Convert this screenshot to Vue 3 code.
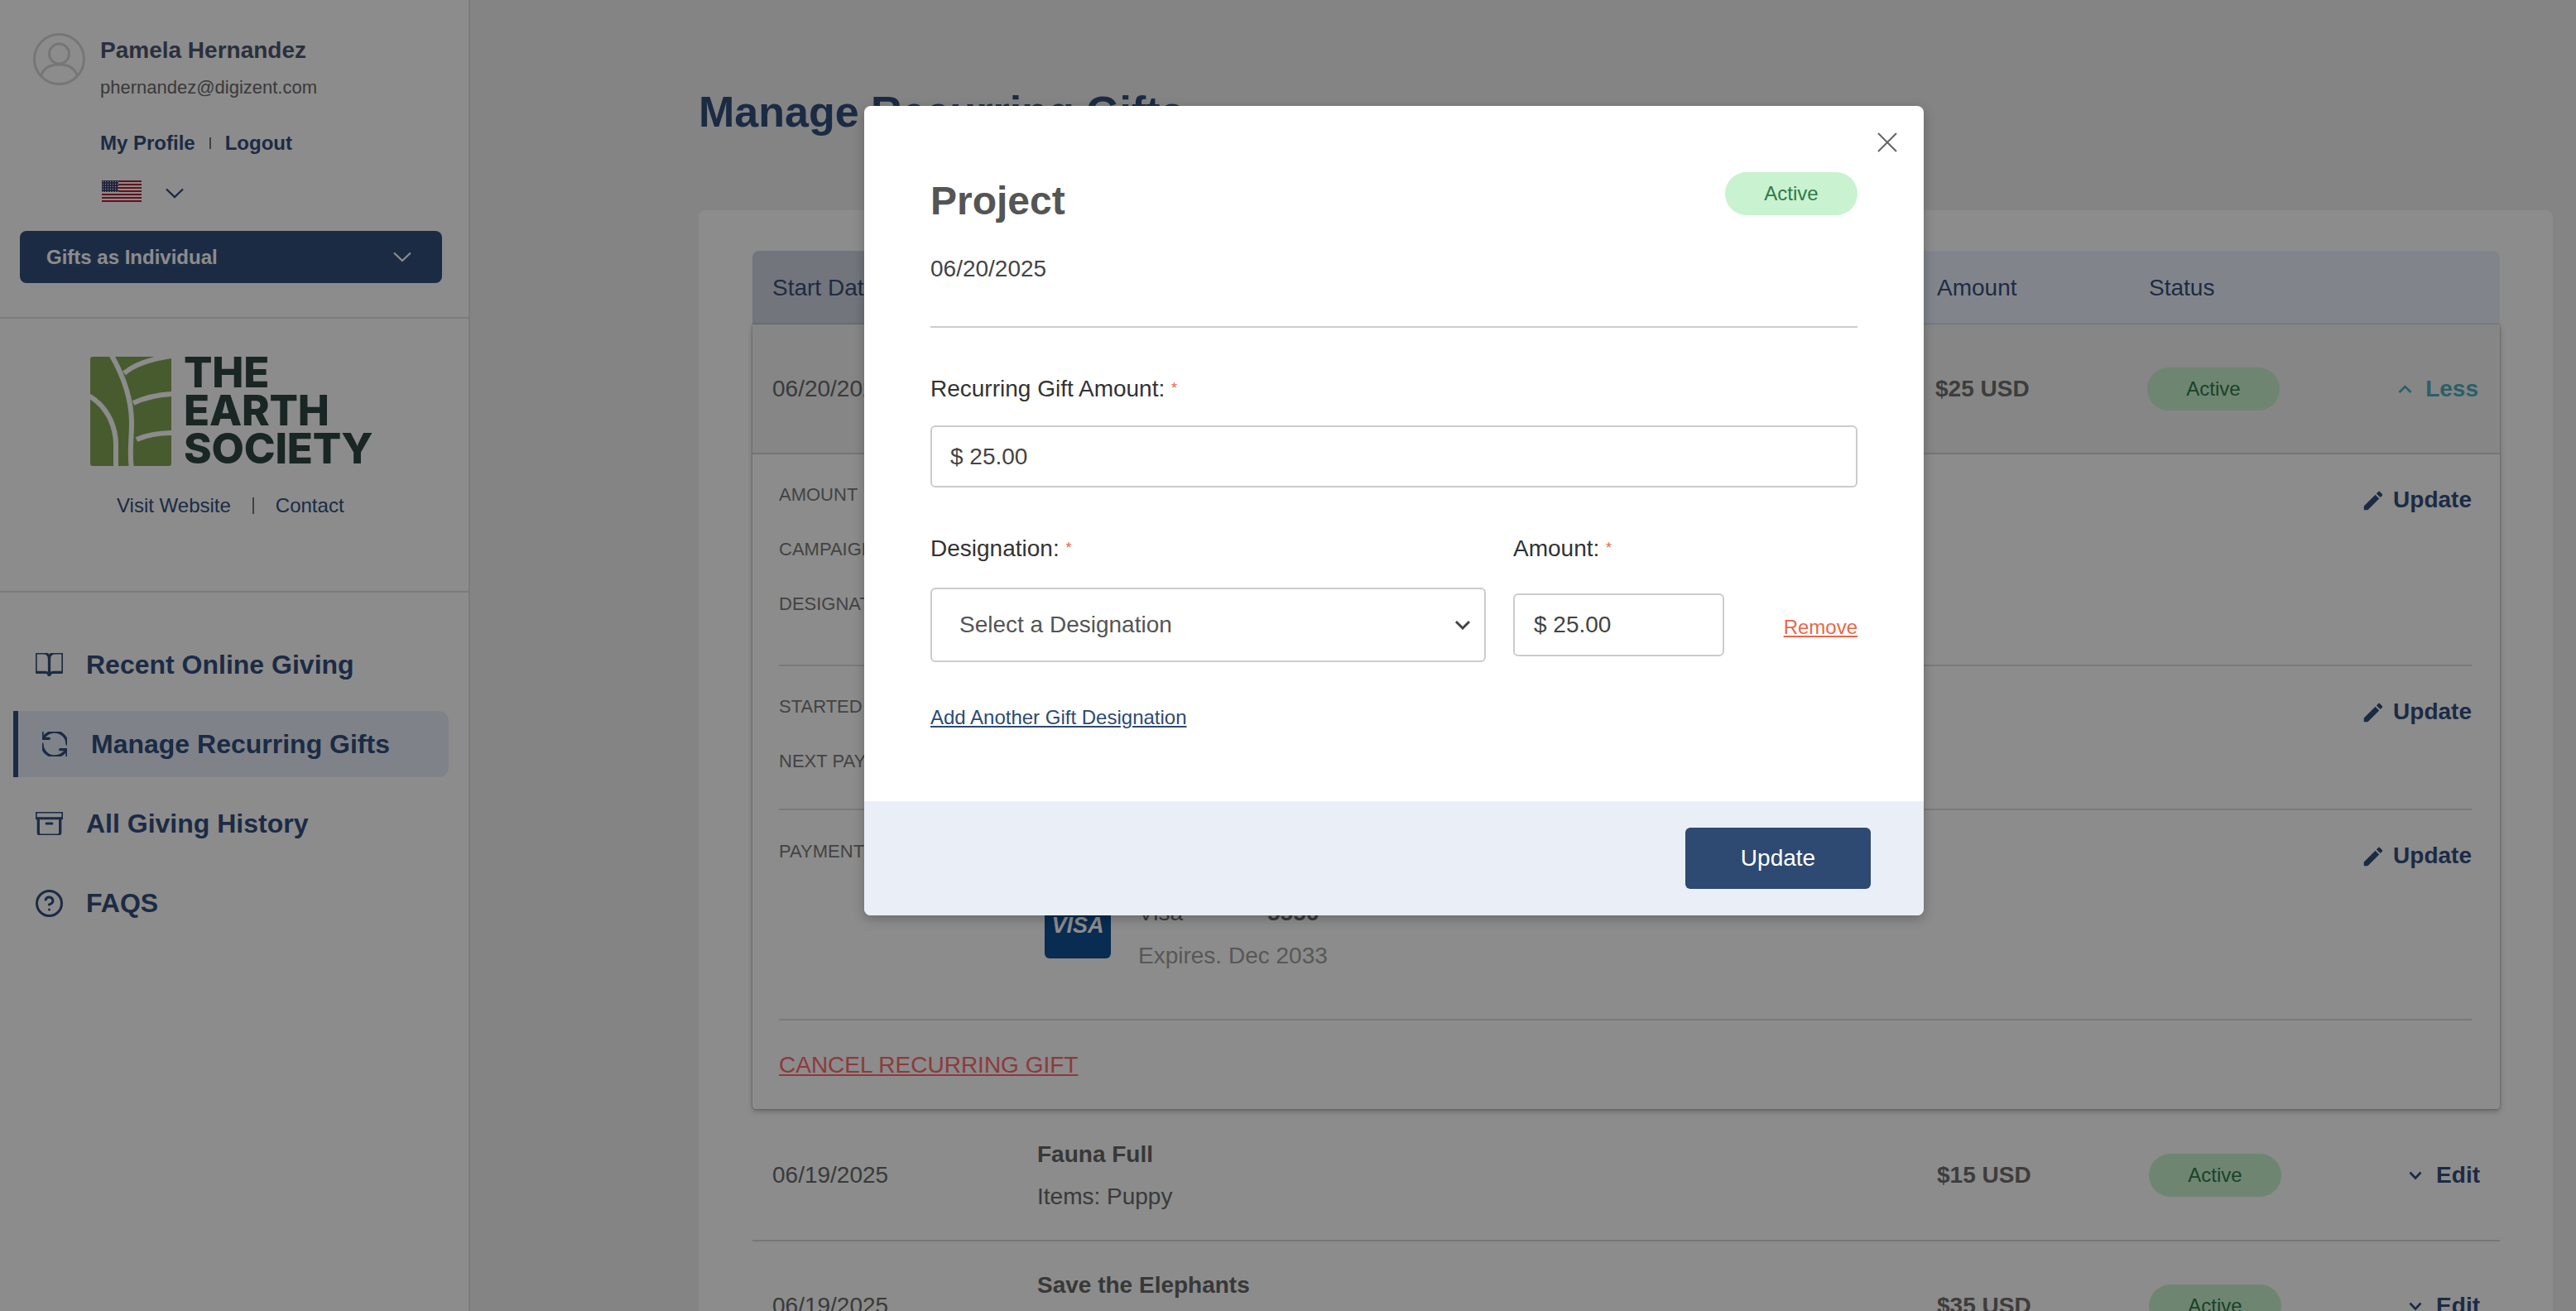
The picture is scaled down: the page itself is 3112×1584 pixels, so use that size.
<script setup>
const navItems = [
  { label: 'Recent Online Giving', icon: 'book' },
  { label: 'Manage Recurring Gifts', icon: 'refresh', active: true },
  { label: 'All Giving History', icon: 'archive' },
  { label: 'FAQS', icon: 'help' },
]
const redStripes = [0, 4, 8, 12, 16, 20, 24]
const rows = [
  { date: '06/19/2025', name: 'Fauna Full', items: 'Items: Puppy', amount: '$15 USD' },
  { date: '06/19/2025', name: 'Save the Elephants', items: 'Items: Elephant', amount: '$35 USD' },
]
</script>

<template>
  <div class="page">
    <aside class="sidebar">
      <div class="profile">
        <svg class="avatar" viewBox="0 0 63 63" fill="none" stroke="#d8d8d8" stroke-width="3">
          <circle cx="31.5" cy="31.5" r="30" />
          <circle cx="31.5" cy="25" r="12" />
          <path d="M9.5 52c3-10 12-14 22-14s19 4 22 14" />
        </svg>
        <div class="profile-info">
          <div class="user-name">Pamela Hernandez</div>
          <div class="user-email">phernandez@digizent.com</div>
          <div class="user-links">
            <span>My Profile</span><i class="bar"></i><span>Logout</span>
          </div>
          <div class="lang">
            <svg class="flag" width="48" height="26" viewBox="0 0 48 26">
              <defs>
                <pattern id="stars" width="3" height="3" patternUnits="userSpaceOnUse">
                  <circle cx="1.5" cy="1.5" r=".7" fill="#fff" />
                </pattern>
              </defs>
              <rect width="48" height="26" fill="#fff" />
              <rect v-for="y in redStripes" :key="y" :y="y" width="48" height="2" fill="#b22234" />
              <rect width="20" height="14" fill="#3c3b6e" />
              <rect width="20" height="14" fill="url(#stars)" />
            </svg>
            <svg class="lang-chevron" width="22" height="13" viewBox="0 0 22 13" fill="none" stroke="#344f7d" stroke-width="2.4">
              <path d="M1 1.5l10 9.5 10-9.5" />
            </svg>
          </div>
        </div>
      </div>
      <div class="gifts-btn">
        <span>Gifts as Individual</span>
        <svg width="22" height="13" viewBox="0 0 22 13" fill="none" stroke="#fff" stroke-width="2.2">
          <path d="M1 1.5l10 9.5 10-9.5" />
        </svg>
      </div>
      <div class="org">
        <div class="logo">
          <svg class="logo-mark" width="98" height="132" viewBox="0 0 98 132">
            <rect width="98" height="132" rx="3" fill="#83a757" />
            <g fill="none" stroke="#fff" stroke-width="6">
              <path d="M25 -3C36 16 50 45 50 80C50 100 47 118 50 135" />
              <path d="M-2 47C18 58 30 80 31 104L31 135" />
              <path d="M41 20C50 12 66 4 98 -1" />
              <path d="M52 56C65 50 80 46 100 45" />
              <path d="M56 100C70 94 85 92 100 92" />
            </g>
          </svg>
          <div class="logo-text">
            <span>THE</span>
            <span>EARTH</span>
            <span>SOCIETY</span>
          </div>
        </div>
        <div class="org-links">
          <span>Visit Website</span><i class="bar tall"></i><span>Contact</span>
        </div>
      </div>
      <nav class="nav">
        <div v-for="item in navItems" :key="item.label" class="nav-item" :class="{ active: item.active }">
          <svg v-if="item.icon === 'book'" class="nav-icon" viewBox="2 3 20 18" width="33" height="28" preserveAspectRatio="none">
            <path d="M12 7v14" />
            <path d="M3 18a1 1 0 0 1-1-1V4a1 1 0 0 1 1-1h5a4 4 0 0 1 4 4 4 4 0 0 1 4-4h5a1 1 0 0 1 1 1v13a1 1 0 0 1-1 1h-6a3 3 0 0 0-3 3 3 3 0 0 0-3-3z" />
          </svg>
          <svg v-else-if="item.icon === 'refresh'" class="nav-icon" viewBox="3 3 18 18" width="30" height="30">
            <path d="M21 12a9 9 0 0 0-9-9 9.75 9.75 0 0 0-6.74 2.74L3 8" />
            <path d="M3 3v5h5" />
            <path d="M3 12a9 9 0 0 0 9 9 9.75 9.75 0 0 0 6.74-2.74L21 16" />
            <path d="M16 16h5v5" />
          </svg>
          <svg v-else-if="item.icon === 'archive'" class="nav-icon" viewBox="2 3 20 18" width="33" height="28" preserveAspectRatio="none">
            <rect x="2" y="3" width="20" height="5" rx="1" />
            <path d="M4 8v11a2 2 0 0 0 2 2h12a2 2 0 0 0 2-2V8" />
            <path d="M10 12h4" />
          </svg>
          <svg v-else class="nav-icon" viewBox="1 1 22 22" width="33" height="33">
            <circle cx="12" cy="12" r="10" />
            <path d="M9.09 9a3 3 0 0 1 5.83 1c0 2-3 3-3 3" />
            <path d="M12 17h.01" />
          </svg>
          <span>{{ item.label }}</span>
        </div>
      </nav>
    </aside>

    <main class="main">
      <h1 class="title">Manage Recurring Gifts</h1>
      <section class="card">
        <div class="thead row-grid">
          <span>Start Date</span>
          <span>Gift</span>
          <span>Amount</span>
          <span>Status</span>
        </div>

        <div class="expanded">
          <div class="row-grid exp-head">
            <span class="cell-date">06/20/2025</span>
            <span class="cell-name"><b>Project</b></span>
            <b class="cell-amount">$25 USD</b>
            <span class="pill">Active</span>
            <span class="action less">
              <svg width="17" height="10" viewBox="0 0 17 10" fill="none" stroke="currentColor" stroke-width="2.6"><path d="M1.5 9l7-7 7 7" /></svg>
              Less
            </span>
          </div>

          <div class="detail detail-a">
            <div class="labels">
              <span>AMOUNT</span>
              <span>CAMPAIGN</span>
              <span>DESIGNATION</span>
            </div>
            <span class="update">
              <svg width="30" height="30" viewBox="0 0 24 24" fill="#344f7d"><path d="M3 17.25V21h3.75L17.81 9.94l-3.75-3.75L3 17.25zM20.71 7.04c.39-.39.39-1.02 0-1.41l-2.34-2.34c-.39-.39-1.02-.39-1.41 0l-1.83 1.83 3.75 3.75 1.83-1.83z" /></svg>
              Update
            </span>
          </div>
          <div class="detail detail-b">
            <div class="labels">
              <span>STARTED</span>
              <span>NEXT PAYMENT</span>
            </div>
            <span class="update">
              <svg width="30" height="30" viewBox="0 0 24 24" fill="#344f7d"><path d="M3 17.25V21h3.75L17.81 9.94l-3.75-3.75L3 17.25zM20.71 7.04c.39-.39.39-1.02 0-1.41l-2.34-2.34c-.39-.39-1.02-.39-1.41 0l-1.83 1.83 3.75 3.75 1.83-1.83z" /></svg>
              Update
            </span>
          </div>
          <div class="detail detail-c">
            <div class="labels pay-label">
              <span>PAYMENT METHOD</span>
            </div>
            <div class="pay">
              <div class="visa">VISA</div>
              <div class="pay-info">
                <div class="pay-line"><span class="pay-brand">Visa</span><b>5556</b></div>
                <div class="pay-exp">Expires. Dec 2033</div>
              </div>
            </div>
            <span class="update">
              <svg width="30" height="30" viewBox="0 0 24 24" fill="#344f7d"><path d="M3 17.25V21h3.75L17.81 9.94l-3.75-3.75L3 17.25zM20.71 7.04c.39-.39.39-1.02 0-1.41l-2.34-2.34c-.39-.39-1.02-.39-1.41 0l-1.83 1.83 3.75 3.75 1.83-1.83z" /></svg>
              Update
            </span>
          </div>
          <div class="cancel-wrap"><span class="cancel">CANCEL RECURRING GIFT</span></div>
        </div>

        <div v-for="row in rows" :key="row.name" class="row-grid row">
          <span class="cell-date">{{ row.date }}</span>
          <div class="cell-name">
            <b>{{ row.name }}</b>
            <span>{{ row.items }}</span>
          </div>
          <b class="cell-amount">{{ row.amount }}</b>
          <span class="pill">Active</span>
          <span class="action edit">
            <svg width="16" height="11" viewBox="0 0 16 11" fill="none" stroke="currentColor" stroke-width="2.6"><path d="M1.5 1.5l6.5 7 6.5-7" /></svg>
            Edit
          </span>
        </div>
      </section>
    </main>

    <div class="overlay"></div>

    <div class="modal">
      <svg class="close" width="24" height="24" viewBox="0 0 24 24" fill="none" stroke="#666" stroke-width="2"><path d="M1 1l22 22M23 1L1 23" /></svg>
      <div class="modal-body">
        <div class="modal-head">
          <h2>Project</h2>
          <span class="pill modal-pill">Active</span>
        </div>
        <div class="modal-date">06/20/2025</div>
        <hr />
        <label class="field-label">Recurring Gift Amount: <em>*</em></label>
        <input class="input full" value="$ 25.00" readonly />
        <div class="split">
          <label class="field-label">Designation: <em>*</em></label>
          <label class="field-label">Amount: <em>*</em></label>
          <span></span>
          <div class="select">
            <span>Select a Designation</span>
            <svg width="20" height="12" viewBox="0 0 20 12" fill="none" stroke="#444" stroke-width="3"><path d="M2 2l8 8 8-8" /></svg>
          </div>
          <input class="input amount" value="$ 25.00" readonly />
          <a class="remove">Remove</a>
        </div>
        <a class="add-link">Add Another Gift Designation</a>
      </div>
      <div class="modal-foot">
        <button class="update-btn">Update</button>
      </div>
    </div>
  </div>
</template>

<style>
html, body { margin: 0; padding: 0; overflow: hidden; }
</style>

<style scoped>
.page {
  position: relative;
  display: flex;
  width: 3112px;
  height: 1584px;
  overflow: hidden;
  background: #f0f0f0;
  font-family: "Liberation Sans", Arial, sans-serif;
  font-size: 28px;
  color: #6a6a6a;
}
.sidebar {
  width: 568px;
  flex: none;
  box-sizing: border-box;
  background: #fff;
  border-right: 2px solid #e0e0e0;
}
.profile { display: flex; padding: 40px 0 0 40px; }
.avatar { width: 63px; height: 63px; flex: none; margin-right: 18px; }
.profile-info { padding-top: 4px; }
.user-name { font-size: 28px; line-height: 34px; font-weight: 700; color: #4d5870; }
.user-email { margin-top: 14px; font-size: 22px; line-height: 28px; color: #6a6a6a; }
.user-links { display: flex; align-items: center; margin-top: 37px; font-size: 24px; line-height: 32px; font-weight: 700; color: #344f7d; }
.bar { width: 2px; height: 14px; margin: 0 17px; background: #777; }
.bar.tall { height: 20px; margin: 0 26px; }
.lang { display: flex; align-items: center; margin-top: 29px; height: 26px; padding-left: 2px; }
.flag { flex: none; }
.lang-chevron { margin-left: 29px; margin-top: 5px; }
.gifts-btn {
  display: flex;
  align-items: center;
  justify-content: space-between;
  width: 510px;
  height: 63px;
  box-sizing: border-box;
  margin: 35px 0 41px 24px;
  padding: 0 37px 0 32px;
  border-radius: 8px;
  background: #344f7d;
  color: #fff;
  font-size: 24px;
  font-weight: 700;
}
.org { border-top: 2px solid #e0e0e0; border-bottom: 2px solid #e0e0e0; padding: 46px 0 87px; }
.logo { display: flex; margin-left: 109px; height: 132px; }
.logo-text {
  display: flex;
  flex-direction: column;
  margin: -4px 0 0 15px;
  font-family: Inter, sans-serif;
  font-size: 51px;
  font-weight: 800;
  line-height: 46px;
  color: #2f4541;
  letter-spacing: -0.2px;
}
.logo-text span { height: 46px; }
.org-links { display: flex; align-items: center; margin: 32px 0 0 141px; font-size: 24px; line-height: 32px; color: #344f7d; }
.nav { display: flex; flex-direction: column; gap: 16px; padding: 47px 24px 0 16px; }
.nav-item {
  display: flex;
  align-items: center;
  gap: 28px;
  height: 80px;
  padding-left: 27px;
  font-size: 32px;
  font-weight: 700;
  color: #344f7d;
}
.nav-item.active {
  gap: 29px;
  padding-left: 29px;
  border-left: 6px solid #344f7d;
  border-radius: 0 12px 12px 0;
  background: #e7eefa;
}
.nav-icon { flex: none; fill: none; stroke: #344f7d; stroke-width: 2; stroke-linecap: round; stroke-linejoin: round; }

.main { flex: 1; min-width: 0; padding: 107px 28px 0 276px; }
.title { margin: 0 0 91px; font-size: 52px; line-height: 56px; font-weight: 700; color: #344f7d; }
.card { padding: 49px 64px 0 65px; border-radius: 8px 8px 0 0; background: #fff; }
.row-grid {
  display: grid;
  grid-template-columns: 320px 1087px 256px 160px 1fr;
  align-items: center;
  padding: 0 24px;
}
.thead {
  height: 89px;
  border-radius: 8px 8px 0 0;
  background: linear-gradient(to right, #cfd6e1 0, #cfd6e1 200px, #ecf3fe 1000px);
  color: #3a5078;
}
.expanded {
  height: 948px;
  margin-bottom: 2px;
  border-radius: 0 0 4px 4px;
  background: #fff;
  box-shadow: 0 3px 6px rgba(0, 0, 0, .25), 0 0 2px rgba(0, 0, 0, .4);
}
.exp-head {
  height: 157px;
  box-sizing: border-box;
  grid-template-columns: 320px 1085px 256px 160px 1fr;
  border-bottom: 2px solid #d4d4d4;
  background: #f4f4f4;
}
.cell-date { color: #6a6a6a; }
.cell-name { display: flex; flex-direction: column; gap: 17px; line-height: 34px; }
.cell-name b { color: #666; }
.cell-amount { color: #6f6f6f; }
.pill {
  display: flex;
  align-items: center;
  justify-content: center;
  width: 160px;
  height: 52px;
  border-radius: 26px;
  background: #c8f2d0;
  color: #2f7a4a;
  font-size: 24px;
}
.action { display: flex; align-items: center; justify-content: flex-end; font-weight: 700; white-space: nowrap; }
.less { gap: 16px; color: #4eb0ba; padding-right: 2px; }
.edit { gap: 17px; color: #344f7d; }

.detail {
  display: flex;
  align-items: flex-start;
  justify-content: space-between;
  box-sizing: border-box;
  margin: 0 34px 0 32px;
  border-bottom: 2px solid #dcdfe4;
}
.detail-a { height: 256px; padding-top: 33px; }
.detail-b { height: 174px; padding-top: 33px; }
.detail-c { height: 254px; padding-top: 34px; }
.labels { display: flex; flex-direction: column; gap: 34px; font-size: 22px; line-height: 32px; color: #7a7a7a; }
.pay-label { width: 321px; flex: none; white-space: nowrap; }
.update { display: flex; align-items: center; gap: 9px; margin-top: 6px; line-height: 32px; font-weight: 700; color: #344f7d; }
.update svg { margin-top: 1px; }
.detail-c .update { margin-top: 5px; }
.pay { display: flex; flex: 1; margin-top: 65px; }
.visa {
  display: flex;
  justify-content: center;
  align-items: center;
  width: 80px;
  height: 80px;
  border-radius: 6px;
  background: #0f5095;
  color: #fff;
  font-size: 27px;
  font-weight: 700;
  font-style: italic;
}
.pay-info { margin: 8px 0 0 33px; line-height: 34px; }
.pay-line { display: flex; color: #6a6a6a; }
.pay-brand { width: 156px; }
.pay-exp { margin-top: 18px; color: #a0a0a0; }
.cancel-wrap { margin: 0 34px 0 32px; padding-top: 37px; line-height: 34px; }
.cancel { color: #ff6a6f; text-decoration: underline; }

.row { height: 158px; box-sizing: border-box; border-bottom: 2px solid #d8d8d8; }

.overlay { position: absolute; inset: 0; background: rgba(0, 0, 0, .45); }

.modal {
  position: absolute;
  top: 128px;
  left: 1044px;
  width: 1280px;
  height: 978px;
  display: flex;
  flex-direction: column;
  border-radius: 8px;
  overflow: hidden;
  background: #fff;
  box-shadow: 0 4px 14px rgba(0, 0, 0, .25);
}
.close { position: absolute; top: 32px; right: 32px; }
.modal-body { flex: 1; padding: 80px 80px 0; }
.modal-head { display: flex; align-items: flex-start; justify-content: space-between; height: 62px; }
.modal-head h2 { margin: 8px 0 0; font-size: 48px; line-height: 54px; font-weight: 700; color: #555; }
.modal-date { margin-top: 38px; line-height: 34px; color: #444; }
hr { margin: 52px 0 56px; height: 2px; border: 0; background: #ccc; }
.field-label { display: block; line-height: 34px; color: #333; }
.field-label em { font-style: normal; font-size: 18px; vertical-align: 4px; color: #e8684a; }
.input {
  display: block;
  box-sizing: border-box;
  border: 2px solid #ccc;
  border-radius: 6px;
  background: #fff;
  outline: 0;
  font: inherit;
  color: #444;
}
.input.full { width: 100%; height: 75px; margin-top: 27px; padding: 0 22px; }
.split {
  display: grid;
  grid-template-columns: 671px 255px 1fr;
  column-gap: 33px;
  row-gap: 30px;
  align-items: center;
  margin-top: 56px;
}
.select {
  display: flex;
  align-items: center;
  justify-content: space-between;
  box-sizing: border-box;
  height: 90px;
  padding: 0 16px 0 33px;
  border: 2px solid #ccc;
  border-radius: 6px;
  color: #555;
}
.input.amount { width: 100%; height: 76px; padding: 0 23px; }
.remove { justify-self: end; margin-top: 6px; font-size: 24px; color: #e8684a; text-decoration: underline; }
.add-link { display: inline-block; margin-top: 52px; font-size: 24px; line-height: 30px; color: #2e4a72; text-decoration: underline; }
.modal-foot { display: flex; justify-content: flex-end; height: 138px; box-sizing: border-box; padding: 32px 64px 0 0; background: #eaeff7; }
.update-btn {
  width: 224px;
  height: 74px;
  border: 0;
  border-radius: 6px;
  background: #2e4a72;
  color: #fff;
  font: inherit;
}
</style>
